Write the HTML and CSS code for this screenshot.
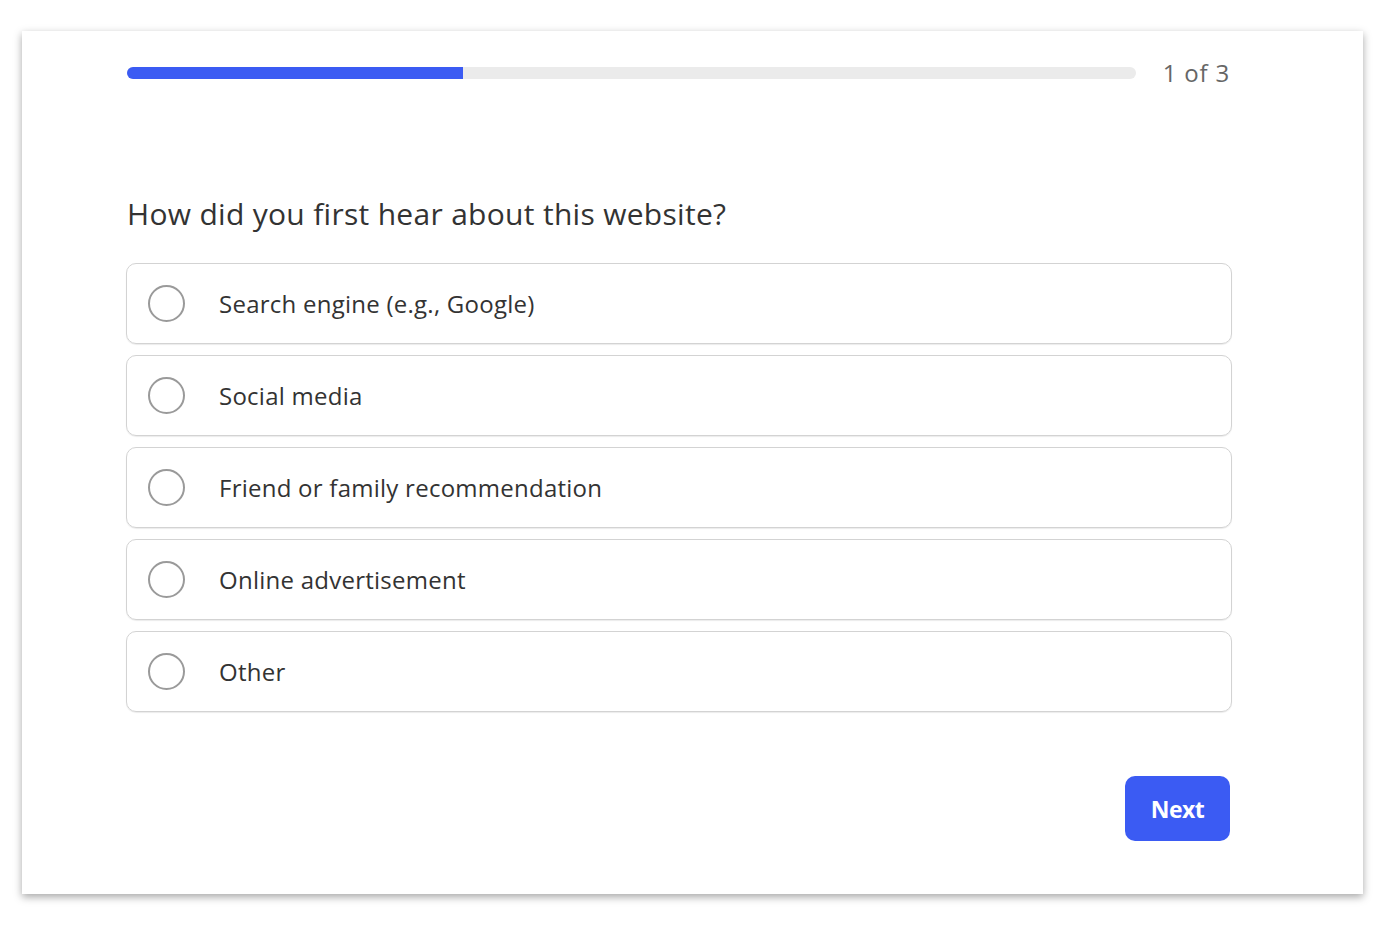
FILE: index.html
```html
<!DOCTYPE html>
<html lang="en">
<head>
    <meta charset="UTF-8">
    <meta name="viewport" content="width=device-width, initial-scale=1.0">
    <title>Survey</title>
    <link rel="stylesheet" href="styles.css">
</head>
<body>
    <div class="card">
        <div class="progress-row">
            <div class="progress">
                <div class="progress-fill" style="width: 33.3%;"></div>
            </div>
            <span class="step">1 of 3</span>
        </div>

        <h2 class="question">How did you first hear about this website?</h2>

        <div class="options">
            <label class="option">
                <input type="radio" name="source" value="search">
                <span class="radio"></span>
                <span class="option-text">Search engine (e.g., Google)</span>
            </label>
            <label class="option">
                <input type="radio" name="source" value="social">
                <span class="radio"></span>
                <span class="option-text">Social media</span>
            </label>
            <label class="option">
                <input type="radio" name="source" value="friend">
                <span class="radio"></span>
                <span class="option-text">Friend or family recommendation</span>
            </label>
            <label class="option">
                <input type="radio" name="source" value="ad">
                <span class="radio"></span>
                <span class="option-text">Online advertisement</span>
            </label>
            <label class="option">
                <input type="radio" name="source" value="other">
                <span class="radio"></span>
                <span class="option-text">Other</span>
            </label>
        </div>

        <div class="actions">
            <button class="next">Next</button>
        </div>
    </div>
</body>
</html>
```

FILE: styles.css
```css
body {
    margin: 0;
    font-family: "Open Sans", "Lato", sans-serif;
    color: #333;
    background-color: #fff;
    padding: 31px 29px 36px 22px;
}
.card {
    background-color: #fff;
    box-shadow: 0 3px 8px rgba(0, 0, 0, 0.35);
    padding: 28px 133px 53px 105px;
}
.progress-row {
    display: flex;
    align-items: center;
    height: 28px;
}
.progress {
    flex: 1;
    height: 12px;
    background-color: #ebebeb;
    border-radius: 6px;
    overflow: hidden;
}
.progress-fill {
    height: 100%;
    background-color: #3b5bf3;
}
.step {
    margin-left: 27px;
    font-size: 24px;
    letter-spacing: 0.8px;
    line-height: 28px;
    color: #666;
}
.question {
    margin: 110px 0 32px;
    font-size: 30px;
    letter-spacing: 0.3px;
    font-weight: normal;
    color: #333;
    line-height: 34px;
}
.options {
    display: flex;
    flex-direction: column;
    gap: 11px;
    margin-right: -2px;
    margin-left: -1px;
}
.option {
    display: flex;
    align-items: center;
    height: 79px;
    padding: 0 21px;
    border: 1px solid #d3d3d3;
    border-radius: 10px;
    cursor: pointer;
    box-shadow: 0 1px 1px rgba(0, 0, 0, 0.08);
}
.option input {
    display: none;
}
.radio {
    width: 33px;
    height: 33px;
    border: 2px solid #9a9a9a;
    border-radius: 50%;
    flex-shrink: 0;
}
.option-text {
    margin-left: 34px;
    font-size: 24px;
    letter-spacing: 0.25px;
    line-height: 30px;
    color: #333;
}
.actions {
    display: flex;
    justify-content: flex-end;
    margin-top: 64px;
}
.next {
    width: 105px;
    height: 65px;
    background-color: #3b5bf3;
    color: #fff;
    border: none;
    border-radius: 10px;
    font-family: "Open Sans", sans-serif;
    font-size: 23px;
    font-weight: bold;
    letter-spacing: -0.5px;
    cursor: pointer;
}
.next:hover {
    background-color: #2a46d6;
}
```
